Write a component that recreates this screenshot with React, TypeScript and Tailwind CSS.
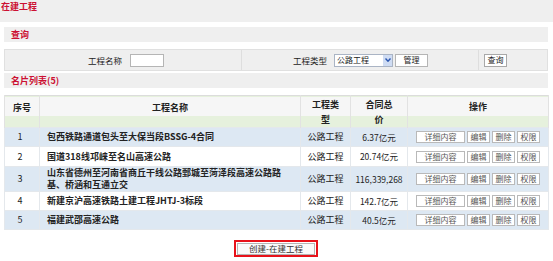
import React from "react";

type Row = {
  no: number;
  name: React.ReactNode;
  kind: string;
  price: string;
  tall?: boolean;
};

const rows: Row[] = [
  { no: 1, name: "包西铁路通道包头至大保当段BSSG-4合同", kind: "公路工程", price: "6.37亿元" },
  { no: 2, name: "国道318线邛崃至名山高速公路", kind: "公路工程", price: "20.74亿元" },
  {
    no: 3,
    name: (
      <>
        山东省德州至河南省商丘干线公路鄄城至菏泽段高速公路路
        <br />
        基、桥涵和互通立交
      </>
    ),
    kind: "公路工程",
    price: "116,339,268",
    tall: true,
  },
  { no: 4, name: "新建京沪高速铁路土建工程JHTJ-3标段", kind: "公路工程", price: "142.7亿元" },
  { no: 5, name: "福建武邵高速公路", kind: "公路工程", price: "40.5亿元" },
];

const font = "font-['Noto_Sans_CJK_SC','Noto_Sans',sans-serif]";

function SmallButton({ label, w }: { label: string; w: string }) {
  return (
    <button
      className={`${w} h-[12px] border border-[#b9b9b9] bg-white text-[8px] leading-[10px] text-[#555] flex items-center justify-center`}
    >
      {label}
    </button>
  );
}

function SectionHeader({ title }: { title: string }) {
  return (
    <div className="mx-[4px] w-[544px] h-[15px] bg-[#efefef] flex items-center pl-[7px]">
      <span className="text-[9px] font-bold text-[#cc1133] leading-none">{title}</span>
    </div>
  );
}

export default function App() {
  return (
    <div className={`w-[553px] h-[261px] bg-white ${font} text-[#222]`}>
      <div className="h-[22px] bg-[#efefef] flex items-start pt-[2px] pl-[1px]">
        <span className="text-[9px] font-bold text-[#cc1133] leading-[10px]">在建工程</span>
      </div>
      <div className="h-[5px]" />
      <SectionHeader title="查询" />
      <div className="h-[7px]" />
      <div className="mx-[4px] w-[544px] h-[22px] bg-[#efefef] border border-[#e0e0e0] flex text-[8.5px]">
        <div className="w-[236px] flex items-center">
          <span className="w-[117px] text-right">工程名称</span>
          <input className="ml-[8px] w-[34px] h-[13px] border border-[#b5b5b5] bg-white" />
        </div>
        <div className="w-[237px] border-l border-[#dedede] flex items-center">
          <span className="w-[85px] text-right">工程类型</span>
          <div className="ml-[7px] w-[59px] h-[13px] border border-[#aab4c4] bg-white flex items-center justify-between">
            <span className="pl-[2px] text-[8px] leading-none">公路工程</span>
            <span className="w-[9px] h-[11px] bg-[#cfdcf3] flex items-center justify-center">
              <svg width="6" height="4" viewBox="0 0 6 4">
                <path d="M0.5 0.5 L3 3.2 L5.5 0.5" stroke="#2a56b0" strokeWidth="1.4" fill="none" />
              </svg>
            </span>
          </div>
          <button className="ml-[2px] w-[33px] h-[13px] border border-[#b5b5b5] bg-white text-[8px] leading-none">
            管理
          </button>
        </div>
        <div className="flex-1 border-l border-[#dedede] flex items-center pl-[5px]">
          <button className="w-[23px] h-[13px] border border-[#a8a8a8] bg-white text-[8px] leading-none">
            查询
          </button>
        </div>
      </div>
      <div className="h-[2px]" />
      <SectionHeader title="名片列表(5)" />
      <div className="h-[7px]" />
      <table className="ml-[4px] w-[544px] border-collapse text-[9px] table-fixed">
        <colgroup>
          <col className="w-[35px]" />
          <col className="w-[261px]" />
          <col className="w-[50px]" />
          <col className="w-[57px]" />
          <col className="w-[141px]" />
        </colgroup>
        <thead>
          <tr className="h-[30px] bg-[linear-gradient(#f6f6f6_0,#f6f6f6_19px,#e6f1dd_19px,#e6f1dd_30px)] border-t border-[#dcdcdc]">
            <th className="align-top pt-[6px] font-bold leading-[12px] border-x border-[#e2e2e2]">序号</th>
            <th className="align-top pt-[6px] font-bold leading-[12px] border-x border-[#e2e2e2]">工程名称</th>
            <th className="align-top pt-[1px] font-bold leading-[15px] border-x border-[#e2e2e2]">
              工程类
              <br />型
            </th>
            <th className="align-top pt-[1px] font-bold leading-[15px] border-x border-[#e2e2e2]">
              合同总
              <br />价
            </th>
            <th className="align-top pt-[5px] font-bold leading-[12px] border-x border-[#e2e2e2]">操作</th>
          </tr>
        </thead>
        <tbody>
          {rows.map((r, i) => (
            <tr
              key={r.no}
              className={`${r.tall ? "h-[25px]" : i === 1 ? "h-[20px]" : "h-[19px]"} ${
                i % 2 === 0 ? "bg-[#dde8f3]" : "bg-white"
              }`}
            >
              <td className="text-center border border-[#e4e8ec] pr-[4px]">{r.no}</td>
              <td className="pl-[7px] font-bold leading-[12px] border border-[#e4e8ec]">{r.name}</td>
              <td className="text-center border border-[#e4e8ec]">{r.kind}</td>
              <td className="text-center border border-[#e4e8ec] text-[8.5px]">{r.price}</td>
              <td className="border border-[#e4e8ec]">
                <div className="flex justify-center gap-[2px]">
                  <SmallButton label="详细内容" w="w-[49px]" />
                  <SmallButton label="编辑" w="w-[23px]" />
                  <SmallButton label="删除" w="w-[23px]" />
                  <SmallButton label="权限" w="w-[23px]" />
                </div>
              </td>
            </tr>
          ))}
        </tbody>
      </table>
      <div className="flex pt-[10px] pl-[234px]">
        <div className="w-[84px] h-[17px] border-2 border-[#e8121a] flex items-center justify-center">
          <button className="w-[78px] h-[12px] border border-[#b5b5b5] bg-[#fafafa] text-[8.5px] leading-none text-[#333]">
            创建-在建工程
          </button>
        </div>
      </div>
    </div>
  );
}
